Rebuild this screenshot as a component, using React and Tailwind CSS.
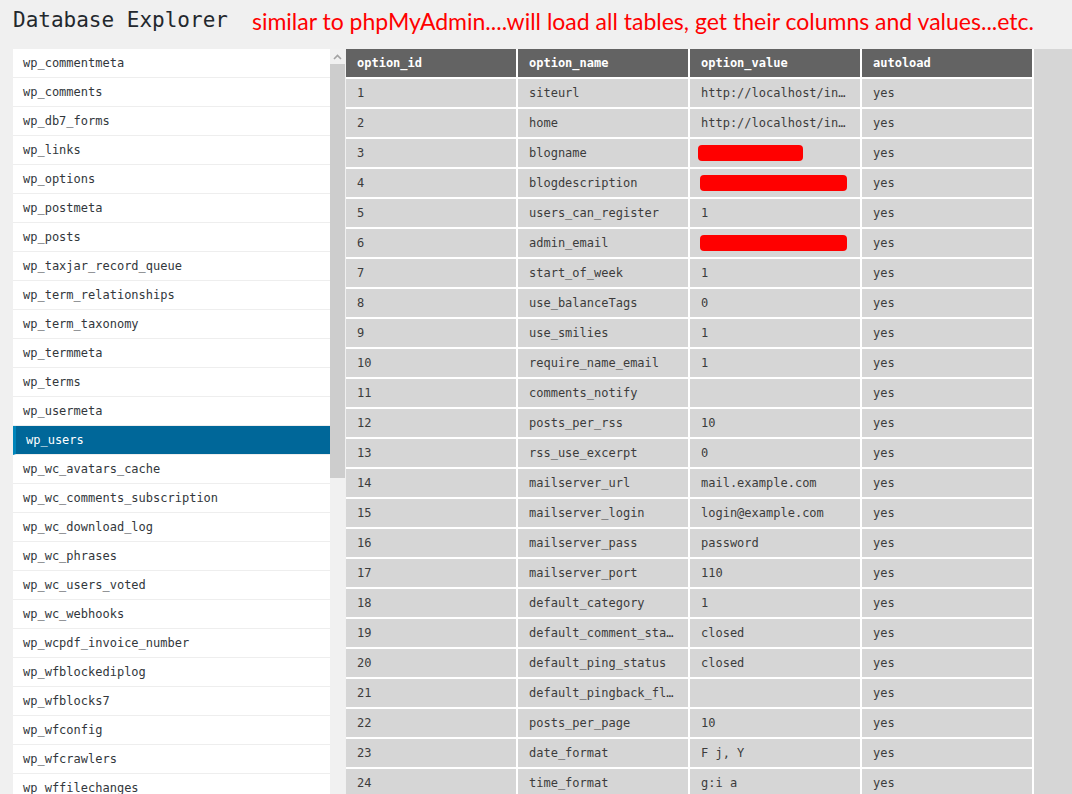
import React from 'react';

const tables = [
  'wp_commentmeta',
  'wp_comments',
  'wp_db7_forms',
  'wp_links',
  'wp_options',
  'wp_postmeta',
  'wp_posts',
  'wp_taxjar_record_queue',
  'wp_term_relationships',
  'wp_term_taxonomy',
  'wp_termmeta',
  'wp_terms',
  'wp_usermeta',
  'wp_users',
  'wp_wc_avatars_cache',
  'wp_wc_comments_subscription',
  'wp_wc_download_log',
  'wp_wc_phrases',
  'wp_wc_users_voted',
  'wp_wc_webhooks',
  'wp_wcpdf_invoice_number',
  'wp_wfblockediplog',
  'wp_wfblocks7',
  'wp_wfconfig',
  'wp_wfcrawlers',
  'wp_wffilechanges',
];

// object value = redacted in the screenshot (red bar)
const rows = [
  ['1', 'siteurl', 'http://localhost/in…'],
  ['2', 'home', 'http://localhost/in…'],
  ['3', 'blogname', { redact: 'w-[105px] ml-[-3px]' }],
  ['4', 'blogdescription', { redact: 'w-[147px] ml-[-1px]' }],
  ['5', 'users_can_register', '1'],
  ['6', 'admin_email', { redact: 'w-[147px] ml-[-1px]' }],
  ['7', 'start_of_week', '1'],
  ['8', 'use_balanceTags', '0'],
  ['9', 'use_smilies', '1'],
  ['10', 'require_name_email', '1'],
  ['11', 'comments_notify', ''],
  ['12', 'posts_per_rss', '10'],
  ['13', 'rss_use_excerpt', '0'],
  ['14', 'mailserver_url', 'mail.example.com'],
  ['15', 'mailserver_login', 'login@example.com'],
  ['16', 'mailserver_pass', 'password'],
  ['17', 'mailserver_port', '110'],
  ['18', 'default_category', '1'],
  ['19', 'default_comment_sta…', 'closed'],
  ['20', 'default_ping_status', 'closed'],
  ['21', 'default_pingback_fl…', ''],
  ['22', 'posts_per_page', '10'],
  ['23', 'date_format', 'F j, Y'],
  ['24', 'time_format', 'g:i a'],
];

const columns = ['option_id', 'option_name', 'option_value', 'autoload'];

const mono = { fontFamily: '"DejaVu Sans Mono", "Liberation Mono", monospace' };

const Sidebar = ({ active }) => (
  <div className="flex shrink-0">
    <ul className="w-[317px] bg-white" style={mono}>
      {tables.map((name) => (
        <li
          key={name}
          className={`h-[29px] flex items-center text-[12px] border-b border-[#eeeeee] ${
            name === active
              ? 'bg-[#006799] text-white border-l-[3px] border-l-[#0085ba] pl-[10px]'
              : 'text-[#32373c] pl-[10px]'
          }`}
        >
          {name}
        </li>
      ))}
    </ul>
    <div className="w-[15px] bg-[#f1f1f1] flex flex-col">
      <div className="h-[15px] flex items-center justify-center">
        <svg width="9" height="6" viewBox="0 0 9 6">
          <path d="M1 5 L4.5 1.5 L8 5" fill="none" stroke="#a3a3a3" strokeWidth="1.6" />
        </svg>
      </div>
      <div className="h-[414px] bg-[#cdcdcd]" />
    </div>
  </div>
);

const OptionsTable = () => (
  <div className="flex-1 bg-[#d6d6d6] ml-px">
    <table className="border-separate border-spacing-0 table-fixed w-[688px] text-[12px]" style={mono}>
      <thead>
        <tr>
          {columns.map((c) => (
            <th
              key={c}
              className="h-[30px] w-[172px] bg-[#636363] text-white font-bold text-left pl-[11px] border-r-2 border-b-2 border-white"
            >
              {c}
            </th>
          ))}
        </tr>
      </thead>
      <tbody>
        {rows.map(([id, name, value]) => (
          <tr key={id}>
            <td className="h-[30px] bg-[#d6d6d6] text-[#3c3c3c] pl-[11px] border-r-2 border-b-2 border-white">{id}</td>
            <td className="h-[30px] bg-[#d6d6d6] text-[#3c3c3c] pl-[11px] border-r-2 border-b-2 border-white whitespace-nowrap overflow-hidden">
              {name}
            </td>
            <td className="h-[30px] bg-[#d6d6d6] text-[#3c3c3c] pl-[11px] border-r-2 border-b-2 border-white whitespace-nowrap overflow-hidden">
              {typeof value === 'object' ? (
                <div className={`h-[16px] rounded-[4px] bg-[#ff0000] ${value.redact}`} />
              ) : (
                value
              )}
            </td>
            <td className="h-[30px] bg-[#d6d6d6] text-[#3c3c3c] pl-[11px] border-r-2 border-b-2 border-white">yes</td>
          </tr>
        ))}
      </tbody>
    </table>
  </div>
);

export default function App() {
  return (
    <div className="h-[794px] overflow-hidden bg-[#f0f0f0]">
      <div className="h-[48px] flex items-start pl-[13px]">
        <h1 className="text-[21px] text-[#23282d] leading-none pt-[10px]" style={mono}>
          Database Explorer
        </h1>
        <p
          className="ml-[24px] pt-[10px] text-[23px] leading-none text-[#ff0000] whitespace-nowrap"
          style={{ fontFamily: 'Lato, "Open Sans", sans-serif' }}
        >
          similar to phpMyAdmin....will load all tables, get their columns and values...etc.
        </p>
      </div>
      <div className="flex pl-[13px] pt-px">
        <Sidebar active="wp_users" />
        <OptionsTable />
      </div>
    </div>
  );
}
